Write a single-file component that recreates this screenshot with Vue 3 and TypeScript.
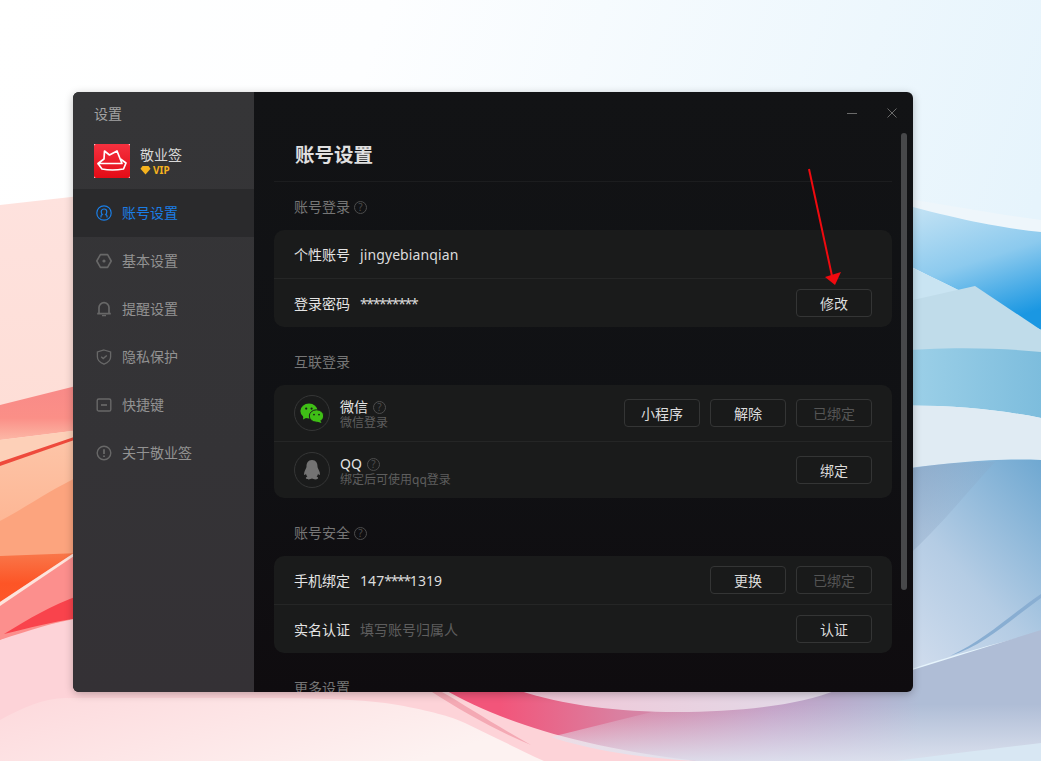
<script setup lang="ts">
const nav = [
  { id: 'user', label: '账号设置', active: true },
  { id: 'gear', label: '基本设置' },
  { id: 'bell', label: '提醒设置' },
  { id: 'shield', label: '隐私保护' },
  { id: 'key', label: '快捷键' },
  { id: 'info', label: '关于敬业签' },
]
</script>

<template>
  <div class="desktop">
    <svg class="wallpaper" viewBox="0 0 1041 761" preserveAspectRatio="none" aria-hidden="true">
      <defs>
        <linearGradient id="sky" x1="0" y1="0" x2="1" y2="0.25">
          <stop offset="0" stop-color="#ffffff" />
          <stop offset="0.35" stop-color="#fdfeff" />
          <stop offset="1" stop-color="#e6f4fc" />
        </linearGradient>
        <linearGradient id="pink" x1="0" y1="0" x2="0" y2="1">
          <stop offset="0" stop-color="#fee2de" />
          <stop offset="1" stop-color="#fed9cd" />
        </linearGradient>
        <linearGradient id="salmon" x1="0" y1="0" x2="0" y2="1">
          <stop offset="0" stop-color="#f88a88" />
          <stop offset="0.6" stop-color="#fb8f87" />
          <stop offset="1" stop-color="#fcb8a6" />
        </linearGradient>
        <linearGradient id="peach" x1="0" y1="0" x2="0" y2="1">
          <stop offset="0" stop-color="#fdc5a8" />
          <stop offset="1" stop-color="#fdb08c" />
        </linearGradient>
        <linearGradient id="orange" x1="0" y1="0" x2="0" y2="1">
          <stop offset="0" stop-color="#f9774a" />
          <stop offset="0.35" stop-color="#fd5526" />
          <stop offset="1" stop-color="#ff5a30" />
        </linearGradient>
        <linearGradient id="blue" x1="0.2" y1="0" x2="0.6" y2="1">
          <stop offset="0" stop-color="#cbe6f5" />
          <stop offset="0.55" stop-color="#8ccaee" />
          <stop offset="1" stop-color="#1a97e2" />
        </linearGradient>
        <linearGradient id="teal" x1="0" y1="0" x2="1" y2="0">
          <stop offset="0" stop-color="#a3d4ea" />
          <stop offset="1" stop-color="#7dbddd" />
        </linearGradient>
        <linearGradient id="steel" x1="1" y1="0" x2="0.2" y2="1">
          <stop offset="0" stop-color="#6fa8d1" />
          <stop offset="0.55" stop-color="#b4cce4" />
          <stop offset="1" stop-color="#d3deee" />
        </linearGradient>
        <linearGradient id="wedge" x1="0" y1="0" x2="1" y2="0.6">
          <stop offset="0" stop-color="#7f97b8" stop-opacity=".7" />
          <stop offset="1" stop-color="#8da7c4" stop-opacity="0" />
        </linearGradient>
        <linearGradient id="under" gradientUnits="userSpaceOnUse" x1="500" y1="0" x2="920" y2="0">
          <stop offset="0" stop-color="#f2557a" />
          <stop offset="0.28" stop-color="#da7fa0" />
          <stop offset="0.65" stop-color="#c3a0c6" />
          <stop offset="1" stop-color="#afbdd6" />
        </linearGradient>
        <linearGradient id="fadeDown" x1="0" y1="0" x2="0" y2="1">
          <stop offset="0.2" stop-color="#dfe4f0" stop-opacity="0" />
          <stop offset="1" stop-color="#dfe4f0" stop-opacity=".9" />
        </linearGradient>
        <linearGradient id="bowl" x1="0" y1="0" x2="1" y2="0">
          <stop offset="0" stop-color="#f2c6d6" />
          <stop offset="1" stop-color="#e0dbe9" />
        </linearGradient>
        <linearGradient id="pale" x1="0" y1="0" x2="1" y2="0.4">
          <stop offset="0" stop-color="#fdd9dc" />
          <stop offset="1" stop-color="#fdf2f1" />
        </linearGradient>
      </defs>
      <rect width="1041" height="761" fill="url(#sky)" />

      <!-- right side ribbons -->
      <path d="M880 195 C950 205 1000 215 1041 220 L1041 352 L880 352 Z" fill="#eef6fb" />
      <path d="M880 198 C950 218 1000 228 1041 232 L1041 330 C1000 312 950 285 880 252 Z" fill="url(#blue)" />
      <path d="M880 252 L1041 330 L1041 352 L880 352 Z" fill="#c9e4f2" />
      <path d="M913 300 L975 286 L1041 330 L1041 352 L913 352 Z" fill="#c0dcea" />
      <path d="M880 352 C950 346 1000 348 1041 352 L1041 418 C1000 410 950 404 880 406 Z" fill="url(#teal)" />
      <path d="M880 406 C950 404 1000 410 1041 418 L1041 460 C1000 458 950 462 880 472 Z" fill="#e0ebf3" />
      <path d="M880 472 C950 462 1000 458 1041 460 L1041 632 C990 645 950 655 880 680 Z" fill="url(#steel)" />
      <path d="M880 472 L913 468 C950 462 975 462 995 462 C960 500 930 540 880 580 Z" fill="url(#wedge)" />
      <path d="M950 656 C985 640 1010 615 1041 594 L1041 598 C1010 620 985 645 950 656 Z" fill="#89aed2" />

      <!-- left side ribbons -->
      <path d="M0 205 L80 196 L80 700 L0 700 Z" fill="url(#pink)" />
      <path d="M0 405 L80 385 L80 430 L0 440 Z" fill="url(#salmon)" />
      <path d="M0 440 L80 430 L80 436 L0 464 Z" fill="#fdd0b8" />
      <path d="M0 462 L80 435 L80 439 L0 467 Z" fill="#ee4a3c" />
      <path d="M0 466 L80 438 L80 560 L0 560 Z" fill="url(#peach)" />
      <path d="M0 521 C30 505 50 490 80 476 L80 560 L0 560 Z" fill="#fca47e" />
      <path d="M0 556 L80 553 L80 610 L0 640 Z" fill="url(#orange)" />
      <path d="M0 602 L80 549 L80 620 L0 640 Z" fill="#fc8f8d" />
      <path d="M0 602 L80 549 L80 552 L0 606 Z" fill="#fde4dc" />
      <path d="M4 634 C30 618 50 606 80 595 L80 618 C50 622 30 628 4 634 Z" fill="#f9434c" />

      <!-- bottom -->
      <path d="M0 640 C30 630 55 622 80 618 L80 690 L480 690 L720 761 L0 761 Z" fill="#fdd3d8" />
      <path d="M0 720 C22 708 44 698 66 698 L220 698 C300 698 360 698 398 705 C430 711 450 716 465 723 C490 735 520 750 544 761 L0 761 Z" fill="url(#pale)" />
      <path d="M432 692 L442 692 C465 705 495 725 531 745 C495 730 460 710 432 692 Z" fill="#f4a9b4" />
      <path d="M445 690 C490 715 560 745 697 761 L1041 761 L1041 630 L880 680 L800 690 Z" fill="url(#under)" />
      <path d="M551 737 C590 750 640 758 697 761 L1041 761 L1041 690 L700 700 Z" fill="url(#fadeDown)" />
      <path d="M896 761 C940 755 1000 748 1041 743 L1041 761 Z" fill="#d8e7f3" />
      <path d="M518 690 C560 705 620 712 677 712 C740 712 800 705 837 690 Z" fill="url(#bowl)" />
    </svg>

    <section class="window">
      <aside class="sidebar">
        <div class="app-title">设置</div>
        <div class="profile">
          <svg class="logo" viewBox="0 0 36 34" aria-hidden="true">
            <defs>
              <linearGradient id="logo-red" x1="0" y1="0" x2="0" y2="1">
                <stop offset="0" stop-color="#f5313f" />
                <stop offset="1" stop-color="#e40b16" />
              </linearGradient>
            </defs>
            <rect width="36" height="34" fill="#fff" />
            <rect width="36" height="34" rx="2" fill="url(#logo-red)" />
            <path d="M4 19.5 L10 15 L10.5 7 L15.5 11 L23 7 L28 19.5 Z" fill="none" stroke="#fff" stroke-width="1.7" stroke-linejoin="round" />
            <path d="M26.5 15 L32 19 L29.5 25 Q18 27 8 25 L4 19.5" fill="none" stroke="#fff" stroke-width="1.7" stroke-linejoin="round" />
          </svg>
          <div class="profile-text">
            <div class="profile-name">敬业签</div>
            <div class="vip">
              <svg width="11" height="10" viewBox="0 0 11 10" aria-hidden="true"><path d="M2.5 1 H8.5 L10.5 3.8 L5.5 9.5 L0.5 3.8 Z" fill="#f5b21e" /></svg>
              <span>VIP</span>
            </div>
          </div>
        </div>
        <nav class="nav">
          <div v-for="item in nav" :key="item.id" class="nav-item" :class="{ active: item.active }">
            <svg class="nav-icon" viewBox="0 0 16 16" fill="none" stroke="currentColor" stroke-width="1.2" aria-hidden="true">
              <template v-if="item.id === 'user'">
                <circle cx="8" cy="8" r="7.2" />
                <path d="M5 12.6 V11 Q5 10 6.3 9.6 Q5.2 8.6 5.2 6.8 A2.8 2.8 0 0 1 10.8 6.8 Q10.8 8.6 9.7 9.6 Q11 10 11 11 V12.6" />
              </template>
              <template v-else-if="item.id === 'gear'">
                <path d="M4.4 1.6 H11.6 L15.2 8 L11.6 14.4 H4.4 L0.8 8 Z" stroke-width="1.6" stroke-linejoin="round" />
                <circle cx="8" cy="8" r="1.6" fill="currentColor" stroke="none" />
              </template>
              <template v-else-if="item.id === 'bell'">
                <path d="M3 12 V6.6 A5 5 0 0 1 13 6.6 V12 M1.2 12.6 H14.8" stroke-width="1.7" />
                <path d="M6 14.6 H10" stroke-width="1.3" />
              </template>
              <template v-else-if="item.id === 'shield'">
                <path d="M8 1 L14.6 3 V8 Q14.6 12.6 8 15.2 Q1.4 12.6 1.4 8 V3 Z" stroke-width="1.3" />
                <path d="M5.2 7.8 L7.2 9.6 L10.8 6.4" stroke-width="1.4" />
              </template>
              <template v-else-if="item.id === 'key'">
                <rect x="1.2" y="2" width="13.6" height="12" rx="1.6" stroke-width="1.4" />
                <path d="M5 8 H11" stroke-width="1.7" />
              </template>
              <template v-else>
                <circle cx="8" cy="8" r="6.8" stroke-width="1.4" />
                <path d="M8 4.2 V9" stroke-width="1.8" />
                <path d="M8 10.6 V12" stroke-width="1.8" />
              </template>
            </svg>
            <span class="nav-label">{{ item.label }}</span>
          </div>
        </nav>
      </aside>

      <main class="main">
        <h1 class="page-title">账号设置</h1>

        <h2 class="section-title">账号登录 <i class="help">?</i></h2>
        <div class="card">
          <div class="row">
            <span class="label">个性账号</span><span class="value">jingyebianqian</span>
          </div>
          <div class="row">
            <span class="label">登录密码</span><span class="value"><span class="stars">*********</span></span>
            <div class="actions"><button class="btn">修改</button></div>
          </div>
        </div>

        <h2 class="section-title">互联登录</h2>
        <div class="card">
          <div class="row tall">
            <div class="circle">
              <svg width="24" height="20" viewBox="0 0 24 20" aria-hidden="true">
                <ellipse cx="9" cy="8" rx="8.6" ry="7.4" fill="#3fbf16" />
                <path d="M3.5 12 L3 16.5 L8 14 Z" fill="#3fbf16" />
                <ellipse cx="16.5" cy="13" rx="7.2" ry="6.2" fill="#3fbf16" stroke="#1a1b1b" stroke-width="1" />
                <path d="M20 17 L21.5 20 L16.5 18.5 Z" fill="#3fbf16" />
                <circle cx="6.2" cy="5.6" r="1.1" fill="#1a1b1b" /><circle cx="11.6" cy="5.6" r="1.1" fill="#1a1b1b" />
                <circle cx="14" cy="11.6" r=".9" fill="#1a1b1b" /><circle cx="19" cy="11.6" r=".9" fill="#1a1b1b" />
              </svg>
            </div>
            <div class="stack">
              <div class="name">微信 <i class="help">?</i></div>
              <div class="sub">微信登录</div>
            </div>
            <div class="actions">
              <button class="btn">小程序</button>
              <button class="btn">解除</button>
              <button class="btn off">已绑定</button>
            </div>
          </div>
          <div class="row tall">
            <div class="circle">
              <svg width="18" height="20" viewBox="0 0 18 20" aria-hidden="true">
                <path d="M9 0 C13 0 14.5 3 14.5 6.5 C14.5 8 16 10 16.6 12 C17.2 14 17 15.5 16 15 L15 13.8 C14.8 15.2 14.2 16 13.6 16.6 C15 17.2 15.4 18 15 18.6 C14 19.8 10.5 19.6 9 18.6 C7.5 19.6 4 19.8 3 18.6 C2.6 18 3 17.2 4.4 16.6 C3.8 16 3.2 15.2 3 13.8 L2 15 C1 15.5 .8 14 1.4 12 C2 10 3.5 8 3.5 6.5 C3.5 3 5 0 9 0 Z" fill="#737373" />
              </svg>
            </div>
            <div class="stack">
              <div class="name">QQ <i class="help">?</i></div>
              <div class="sub">绑定后可使用qq登录</div>
            </div>
            <div class="actions"><button class="btn">绑定</button></div>
          </div>
        </div>

        <h2 class="section-title">账号安全 <i class="help">?</i></h2>
        <div class="card">
          <div class="row">
            <span class="label">手机绑定</span><span class="value">147<span class="stars">****</span>1319</span>
            <div class="actions">
              <button class="btn">更换</button>
              <button class="btn off">已绑定</button>
            </div>
          </div>
          <div class="row">
            <span class="label">实名认证</span><span class="value muted">填写账号归属人</span>
            <div class="actions"><button class="btn">认证</button></div>
          </div>
        </div>

        <h2 class="section-title">更多设置</h2>

        <div class="win-controls">
          <svg width="10" height="10" viewBox="0 0 10 10" aria-hidden="true"><path d="M0 5.5 H10" stroke="#6a6a6a" /></svg>
          <svg width="10" height="10" viewBox="0 0 10 10" aria-hidden="true"><path d="M.5 .5 L9.5 9.5 M9.5 .5 L.5 9.5" stroke="#6a6a6a" /></svg>
        </div>
        <div class="scrollbar"></div>
      </main>

      <svg class="arrow" width="40" height="124" viewBox="0 0 40 124" aria-hidden="true">
        <path d="M3 1 L26 108" stroke="#f00a0f" stroke-width="2" />
        <path d="M19 109 L35 104 L29 117 Z" fill="#f00a0f" />
      </svg>
    </section>
  </div>
</template>

<style>
html, body { margin: 0; background: #fff; }
</style>

<style scoped>
.desktop {
  position: relative;
  width: 1041px;
  height: 761px;
  overflow: hidden;
  font-family: "Noto Sans", "Noto Sans CJK SC", sans-serif;
}
.wallpaper { position: absolute; inset: 0; width: 100%; height: 100%; }
.window {
  position: absolute;
  left: 73px;
  top: 92px;
  width: 840px;
  height: 600px;
  display: flex;
  border-radius: 6px;
  overflow: hidden;
  background: linear-gradient(#121315, #101114 55%, #0f0c0f);
  box-shadow: 0 2px 8px rgba(0, 0, 0, .25);
}
.sidebar {
  width: 181px;
  flex: none;
  background: linear-gradient(#353537, #343336 60%, #343135);
  display: flex;
  flex-direction: column;
}
.app-title {
  padding: 12px 0 0 21px;
  font-size: 14px;
  line-height: 20px;
  color: #a3a3a3;
}
.profile {
  display: flex;
  align-items: center;
  gap: 10px;
  margin-top: 20px;
  padding-left: 21px;
}
.logo { width: 36px; height: 34px; flex: none; }
.profile-name { font-size: 14px; line-height: 18px; color: #d8d8d8; }
.vip {
  display: flex;
  align-items: center;
  gap: 2px;
  font-size: 10px;
  line-height: 12px;
  font-weight: 700;
  color: #f5b21e;
}
.nav { margin-top: 11px; }
.nav-item {
  height: 48px;
  display: flex;
  align-items: center;
  gap: 10px;
  padding-left: 23px;
  font-size: 14px;
  color: #929292;
}
.nav-label { margin-bottom: 2px; }
.nav-item.active { background: #2a2a2c; color: #1a7ee6; }
.nav-icon { width: 16px; height: 16px; flex: none; color: #686868; }
.active .nav-icon { color: #1a7ee6; }
.main {
  position: relative;
  flex: 1;
  min-width: 0;
  padding: 0 21px 0 20px;
  overflow: hidden;
}
.page-title {
  margin: 46px 0 0;
  padding: 0 0 9px 21px;
  border-bottom: 1px solid #1c1d1f;
  font-size: 19.5px;
  line-height: 34px;
  font-weight: 700;
  color: #e0e0e0;
}
.section-title {
  margin: 25px 0 13px 20px;
  font-size: 14px;
  line-height: 20px;
  font-weight: 400;
  color: #767676;
  display: flex;
  align-items: center;
  gap: 4px;
}
.page-title + .section-title { margin-top: 15px; }
.help {
  width: 11px;
  height: 11px;
  border: 1px solid #4c4c4c;
  border-radius: 50%;
  display: inline-flex;
  align-items: center;
  justify-content: center;
  font-style: normal;
  font-size: 10px;
  line-height: 1;
  color: #4c4c4c;
}
.card {
  border-radius: 10px;
  background: #1a1b1b;
}
.row {
  height: 48px;
  display: flex;
  align-items: center;
  padding: 0 20px;
  font-size: 14px;
}
.row + .row { border-top: 1px solid #252626; }
.row.tall { height: 56px; }
.label { color: #e4e4e4; }
.value { margin-left: 10px; color: #dcdcdc; letter-spacing: .1px; }
.value.muted { color: #5e5e5e; letter-spacing: 0; }
.stars { letter-spacing: -1.35px; }
.actions { margin-left: auto; display: flex; gap: 10px; }
.btn {
  width: 76px;
  height: 28px;
  padding: 1px 0 0;
  border: 1px solid #343535;
  border-radius: 4px;
  background: #191a1a;
  color: #dcdcdc;
  font: inherit;
  font-size: 14px;
  line-height: 25px;
}
.btn.off { color: #555; }
.circle {
  width: 36px;
  height: 36px;
  flex: none;
  box-sizing: border-box;
  border: 1px solid #353636;
  border-radius: 50%;
  display: flex;
  align-items: center;
  justify-content: center;
}
.stack { margin-left: 10px; padding-top: 4px; }
.name {
  display: flex;
  align-items: center;
  gap: 5px;
  font-size: 14px;
  line-height: 16px;
  color: #e4e4e4;
}
.sub { font-size: 12px; line-height: 16px; color: #5e5e5e; }
.win-controls {
  position: absolute;
  top: 16px;
  right: 16px;
  display: flex;
  align-items: center;
  gap: 30px;
}
.win-controls svg { display: block; }
.scrollbar {
  position: absolute;
  left: 647px;
  top: 41px;
  width: 6px;
  height: 457px;
  border-radius: 3px;
  background: #47484a;
}
.arrow { position: absolute; left: 733px; top: 76px; }
</style>
